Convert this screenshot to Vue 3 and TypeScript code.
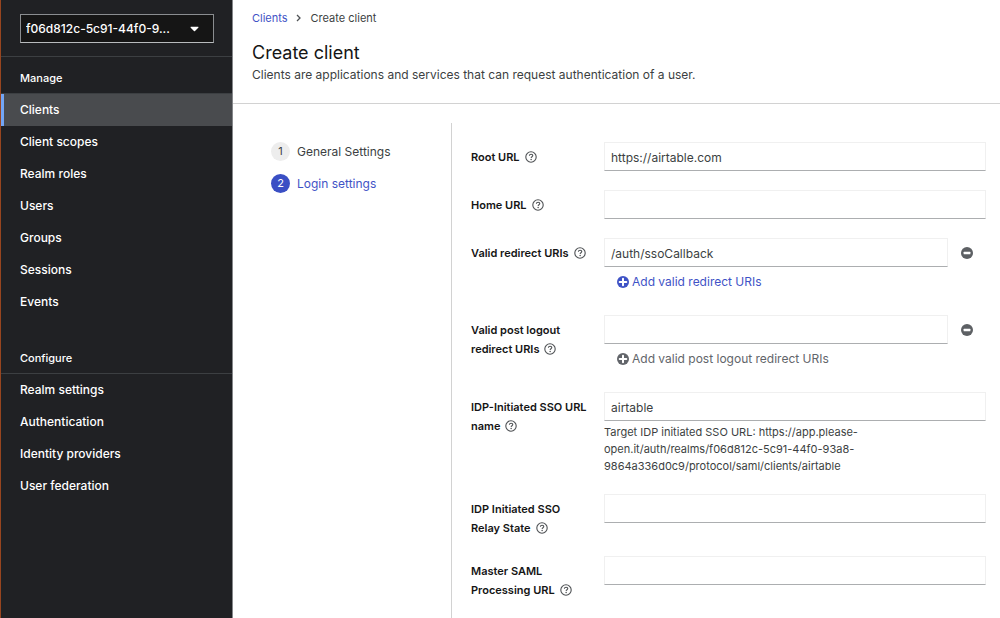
<script setup lang="ts">
import { ref } from 'vue'

interface NavSection {
  title: string
  items: string[]
}

interface Field {
  id: string
  label: string
  value: string
  add?: string
  addEnabled?: boolean
  help?: string
}

const sections: NavSection[] = [
  {
    title: 'Manage',
    items: ['Clients', 'Client scopes', 'Realm roles', 'Users', 'Groups', 'Sessions', 'Events'],
  },
  {
    title: 'Configure',
    items: ['Realm settings', 'Authentication', 'Identity providers', 'User federation'],
  },
]

const steps = ['General Settings', 'Login settings']
const activeStep = 1

const fields = ref<Field[]>([
  { id: 'root-url', label: 'Root URL', value: 'https://airtable.com' },
  { id: 'home-url', label: 'Home URL', value: '' },
  {
    id: 'redirect-uris',
    label: 'Valid redirect URIs',
    value: '/auth/ssoCallback',
    add: 'Add valid redirect URIs',
    addEnabled: true,
  },
  {
    id: 'logout-uris',
    label: 'Valid post logout redirect URIs',
    value: '',
    add: 'Add valid post logout redirect URIs',
    addEnabled: false,
  },
  {
    id: 'sso-name',
    label: 'IDP-Initiated SSO URL name',
    value: 'airtable',
    help: 'Target IDP initiated SSO URL: https://app.please-open.it/auth/realms/f06d812c-5c91-44f0-93a8-9864a336d0c9/protocol/saml/clients/airtable',
  },
  { id: 'relay-state', label: 'IDP Initiated SSO Relay State', value: '' },
  { id: 'saml-url', label: 'Master SAML Processing URL', value: '' },
])
</script>

<template>
  <div class="page">
    <aside class="sidebar">
      <div class="realm">
        <div class="realm-box">
          <select class="realm-select" aria-label="Realm">
            <option>f06d812c-5c91-44f0-9...</option>
          </select>
          <svg class="caret" viewBox="0 0 10 6" aria-hidden="true">
            <path d="M1 0.5h8q0.8 0.2 0.2 1L5.6 5.2q-0.6 0.5-1.2 0L0.8 1.5q-0.6-0.8 0.2-1z" fill="#fff" />
          </svg>
        </div>
      </div>
      <nav v-for="section in sections" :key="section.title" class="section" :aria-label="section.title">
        <h2 class="section-title">{{ section.title }}</h2>
        <ul class="nav-list">
          <li v-for="item in section.items" :key="item">
            <a href="#" class="nav-link" :class="{ current: item === 'Clients' }">{{ item }}</a>
          </li>
        </ul>
      </nav>
    </aside>

    <main class="main">
      <header class="header">
        <nav class="crumbs" aria-label="Breadcrumb">
          <a href="#" class="link">Clients</a>
          <svg class="chevron" viewBox="0 0 5 8" aria-hidden="true">
            <path d="M1 1l3 3-3 3" fill="none" stroke="#4f5255" stroke-width="1.3" />
          </svg>
          <span>Create client</span>
        </nav>
        <h1 class="title">Create client</h1>
        <p class="subtitle">Clients are applications and services that can request authentication of a user.</p>
      </header>

      <div class="wizard">
        <ol class="steps">
          <li v-for="(step, i) in steps" :key="step">
            <button type="button" class="step" :class="{ active: i === activeStep }">
              <span class="step-number">{{ i + 1 }}</span>
              <span>{{ step }}</span>
            </button>
          </li>
        </ol>

        <form class="form" @submit.prevent>
          <div v-for="field in fields" :key="field.id" class="row">
            <div class="label-cell">
              <label :for="field.id">{{ field.label }}</label>
              <button type="button" class="help-button" :aria-label="`Help for ${field.label}`">
                <svg viewBox="0 0 12 12" aria-hidden="true">
                  <circle cx="6" cy="6" r="5.2" fill="none" stroke="#4f5255" stroke-width="1.1" />
                  <path
                    d="M4.4 4.8C4.4 3.7 5.1 3.2 6.1 3.2s1.7 0.6 1.7 1.4C7.8 5.7 6.2 5.7 6.1 6.9"
                    fill="none"
                    stroke="#4f5255"
                    stroke-width="1.1"
                  />
                  <circle cx="6.1" cy="8.5" r="0.75" fill="#4f5255" />
                </svg>
              </button>
            </div>
            <div class="control">
              <div class="input-line">
                <input :id="field.id" v-model="field.value" class="input" type="text" />
                <button v-if="field.add" type="button" class="remove" :aria-label="`Remove ${field.label}`">
                  <svg viewBox="0 0 12 12" aria-hidden="true">
                    <circle cx="6" cy="6" r="6" fill="#5d6064" />
                    <rect x="2.6" y="4.8" width="6.8" height="2.4" rx="0.5" fill="#fff" />
                  </svg>
                </button>
              </div>
              <button v-if="field.add" type="button" class="add" :disabled="!field.addEnabled">
                <svg viewBox="0 0 12 12" aria-hidden="true">
                  <circle cx="6" cy="6" r="6" fill="currentColor" />
                  <path d="M6 2.7v6.6M2.7 6h6.6" stroke="#fff" stroke-width="2" stroke-linecap="round" />
                </svg>
                <span>{{ field.add }}</span>
              </button>
              <p v-if="field.help" class="help-text">{{ field.help }}</p>
            </div>
          </div>
        </form>
      </div>
    </main>
  </div>
</template>

<style>
body {
  margin: 0;
  background: #fff;
}
</style>

<style scoped>
.page {
  display: flex;
  min-height: 100vh;
  font-family: Inter, 'Liberation Sans', sans-serif;
  font-size: 12px;
  color: #3c3f42;
}
.page * {
  box-sizing: border-box;
}
button,
input,
select {
  font: inherit;
  color: inherit;
}
button {
  border: 0;
  padding: 0;
  background: none;
  cursor: pointer;
}
ul,
ol {
  list-style: none;
  margin: 0;
  padding: 0;
}
svg {
  display: block;
  flex: none;
}

.sidebar {
  flex: none;
  width: 233px;
  border-left: 1px solid #97451f;
  border-right: 1px solid #85878a;
  background: #202124;
  color: #fff;
  font-weight: 500;
}
.realm {
  padding: 14px 18px 13px 19px;
  border-bottom: 1px solid #3c3f42;
}
.realm-box {
  display: grid;
  align-items: center;
}
.realm-select {
  grid-area: 1 / 1;
  width: 100%;
  height: 29px;
  padding: 0 5px;
  appearance: none;
  border: 1px solid #8a8d90;
  border-bottom-color: #b8bbbe;
  border-radius: 0;
  background: #151515;
}
.caret {
  grid-area: 1 / 1;
  justify-self: end;
  width: 9px;
  height: 6px;
  margin-right: 15px;
  pointer-events: none;
}
.section + .section {
  margin-top: 19px;
}
.section-title {
  margin: 0;
  padding: 12px 19px 6px;
  border-bottom: 1px solid #3c3f42;
  font-size: 11px;
  font-weight: 500;
  line-height: 18px;
}
.nav-link {
  display: block;
  padding-left: 16px;
  border-left: 3px solid transparent;
  color: #fff;
  line-height: 32px;
  text-decoration: none;
}
.nav-link.current {
  border-left-color: #73a5f5;
  background: #494b4e;
}

.main {
  flex: 1;
  min-width: 0;
  display: flex;
  flex-direction: column;
}
.header {
  padding: 9px 19px 19px;
  border-bottom: 1px solid #d2d2d2;
}
.crumbs {
  display: flex;
  align-items: center;
  font-size: 11px;
  line-height: 18px;
}
.link {
  color: #3f53c6;
  text-decoration: none;
}
.chevron {
  width: 5px;
  height: 8px;
  margin: 0 10px 0 8px;
}
.title {
  margin: 14px 0 0;
  color: #151515;
  font-size: 18px;
  font-weight: 400;
  line-height: 24px;
}
.subtitle {
  margin: 0;
  line-height: 19px;
}

.wizard {
  flex: 1;
  display: flex;
  padding: 19px 14px 0 0;
}
.steps {
  flex: none;
  width: 219px;
  padding: 19px 19px 0 38px;
  border-right: 1px solid #d2d2d2;
}
.step {
  display: flex;
  align-items: center;
  gap: 7px;
  height: 19px;
  margin-bottom: 13px;
}
.step-number {
  width: 19px;
  height: 19px;
  border-radius: 50%;
  background: #ededed;
  font-size: 11px;
  line-height: 19px;
  text-align: center;
}
.step.active {
  color: #3f53c6;
}
.step.active .step-number {
  background: #3a4fc4;
  color: #fff;
}

.form {
  flex: 1;
  min-width: 0;
  display: flex;
  flex-direction: column;
  gap: 18px;
  padding: 19px 0 18px 19px;
}
.row {
  display: grid;
  grid-template-columns: 133px 1fr;
}
.label-cell {
  padding: 6px 12px 0 0;
  color: #151515;
  font-size: 11px;
  font-weight: 600;
  line-height: 19px;
}
.help-button {
  margin-left: 5px;
  vertical-align: -2px;
}
.help-button svg {
  width: 12px;
  height: 12px;
}
.control {
  padding-bottom: 1px;
}
.input-line {
  display: flex;
}
.input {
  flex: 1;
  min-width: 0;
  height: 29px;
  padding: 1px 6px 0;
  border: 1px solid #f0f0f0;
  border-bottom-color: #acaeb0;
  border-radius: 0;
  background: #fff;
  outline: none;
}
.remove {
  display: flex;
  align-items: center;
  justify-content: center;
  width: 38px;
}
.remove svg,
.add svg {
  width: 12px;
  height: 12px;
}
.add {
  display: flex;
  align-items: center;
  gap: 3px;
  height: 29px;
  padding-left: 13px;
  color: #3f53c6;
}
.add:disabled {
  color: #62656a;
  cursor: default;
}
.help-text {
  max-width: 260px;
  margin: 0;
  padding-top: 3px;
  font-size: 11px;
  line-height: 17px;
}
</style>
